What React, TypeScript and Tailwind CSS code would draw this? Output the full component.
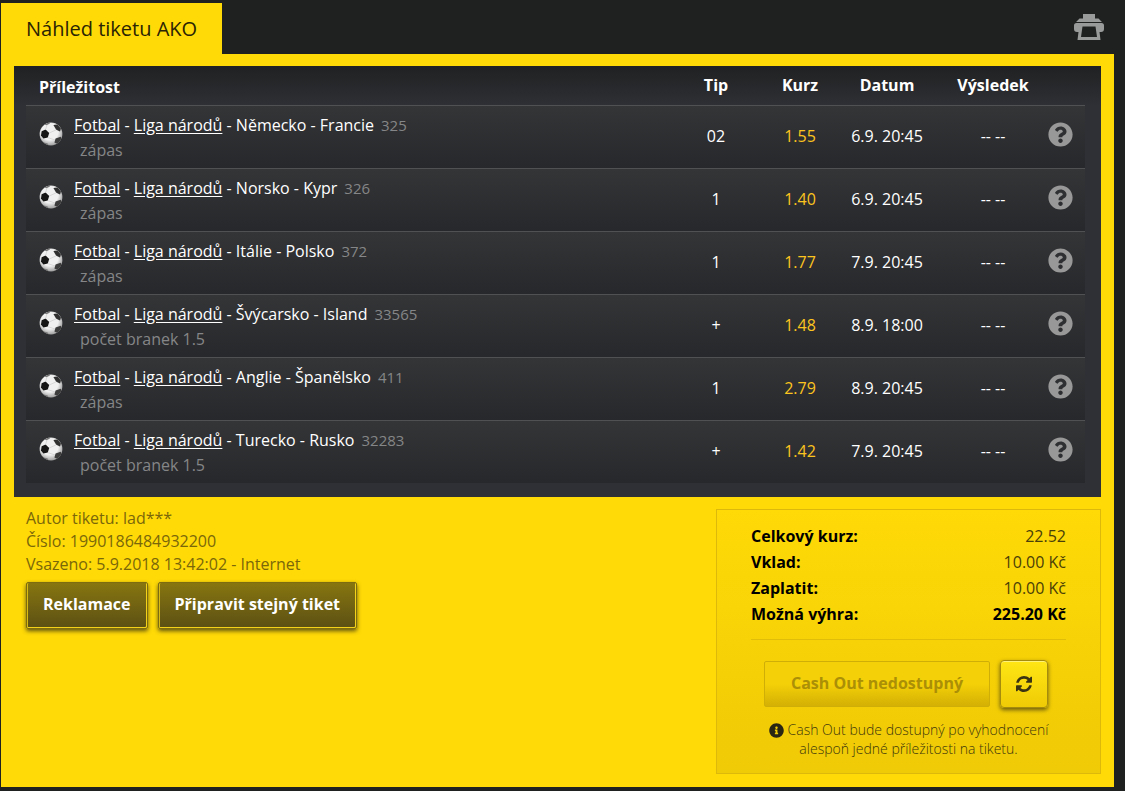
import React from "react";
import { FaInfoCircle, FaQuestionCircle } from "react-icons/fa";

interface Bet {
  match: string;
  code: string;
  market: string;
  tip: string;
  odds: string;
  date: string;
}

const bets: Bet[] = [
  { match: "Německo - Francie", code: "325", market: "zápas", tip: "02", odds: "1.55", date: "6.9. 20:45" },
  { match: "Norsko - Kypr", code: "326", market: "zápas", tip: "1", odds: "1.40", date: "6.9. 20:45" },
  { match: "Itálie - Polsko", code: "372", market: "zápas", tip: "1", odds: "1.77", date: "7.9. 20:45" },
  { match: "Švýcarsko - Island", code: "33565", market: "počet branek 1.5", tip: "+", odds: "1.48", date: "8.9. 18:00" },
  { match: "Anglie - Španělsko", code: "411", market: "zápas", tip: "1", odds: "2.79", date: "8.9. 20:45" },
  { match: "Turecko - Rusko", code: "32283", market: "počet branek 1.5", tip: "+", odds: "1.42", date: "7.9. 20:45" },
];

const summary = [
  { label: "Celkový kurz:", value: "22.52" },
  { label: "Vklad:", value: "10.00 Kč" },
  { label: "Zaplatit:", value: "10.00 Kč" },
  { label: "Možná výhra:", value: "225.20 Kč", strong: true },
];

const BallIcon = () => (
  <svg viewBox="0 0 24 24" className="h-6 w-6 shrink-0" aria-hidden="true">
    <defs>
      <radialGradient id="ball" cx="0.45" cy="0.4" r="0.6">
        <stop offset="0.6" stopColor="#f0f0f0" />
        <stop offset="1" stopColor="#a0a0a0" />
      </radialGradient>
      <clipPath id="ball-clip">
        <circle cx="12" cy="12" r="11.4" />
      </clipPath>
    </defs>
    <circle cx="12" cy="12" r="11.4" fill="url(#ball)" />
    <g clipPath="url(#ball-clip)">
      <path d="M2.6 9.2 6.6 7.6 10.2 11 8.8 15.6 4.4 16.6 2 13.4Z" fill="#151515" />
      <path d="M14.4 3 18.4 2.4 22 6.4 21 9.6 17.2 7.8Z" fill="#303030" />
      <path d="M16.6 16.6 21.6 14.8 23 17 18.6 22 15.4 20.6Z" fill="#3c3c3c" />
      <path d="M5.4 2.4 9.6 0 11 1.4 7.6 3.2Z" fill="#777" />
      <path d="M5 20.4 8.6 21.4 10 24 6 23Z" fill="#777" />
      <path d="M10.2 11 17.2 7.8M8.8 15.6 16 18M6.6 7.6 8 3" stroke="#d2d2d2" strokeWidth="0.8" fill="none" />
    </g>
  </svg>
);

const PrinterIcon = () => (
  <svg viewBox="0 0 30 26" className="h-[26px] w-[30px]" fill="#999b9b" aria-hidden="true">
    <path d="M9 0h12v4.500h3.500L28 8H2l3.500-3.500H9Z" />
    <path
      fillRule="evenodd"
      d="M2.500 9h25Q30 9 30 11.500V15q0 3-3 3h-1.500l1 8h-23l1-8H3q-3 0-3-3v-3.500Q0 9 2.500 9ZM8.500 12.500 7 23h16l-1.500-10.500Z"
    />
  </svg>
);

const RefreshIcon = () => (
  <svg viewBox="0 0 1536 1536" className="h-4 w-4" fill="#3b3413" aria-hidden="true">
    <path d="M1511 928q0 5-1 7-64 268-268 434.500T764 1536q-146 0-282.500-55T238 1324l-129 129q-19 19-45 19t-45-19-19-45V960q0-26 19-45t45-19h448q26 0 45 19t19 45-19 45l-137 137q71 66 161 102t187 36q134 0 250-65t186-179q11-17 53-117 8-23 30-23h192q13 0 22.500 9.500t9.500 22.500zm25-800v448q0 26-19 45t-45 19h-448q-26 0-45-19t-19-45 19-45l138-138Q969 256 768 256q-134 0-250 65T332 500q-11 17-53 117-8 23-30 23H50q-13 0-22.500-9.500T18 608v-7q65-268 270-434.500T768 0q146 0 284 55.500T1297 212l130-129q19-19 45-19t45 19 19 45z" />
  </svg>
);

const BetRow = ({ bet }: { bet: Bet }) => (
  <tr className="h-[63px] border-t border-[#505153] bg-linear-to-b from-[#343537] to-[#27282b] text-center">
    <td className="text-left">
      <div className="flex items-start gap-[11px] pt-1 pl-[13px]">
        <div className="pt-[9px]">
          <BallIcon />
        </div>
        <div className="pb-[2px] leading-[25px]">
          <div className="text-white">
            <a href="#fotbal" className="underline underline-offset-2">Fotbal</a>
            {" - "}
            <a href="#liga-narodu" className="underline underline-offset-2">Liga národů</a>
            {" - "}
            {bet.match}
            <span className="ml-[7px] text-[15px] text-[#858687]">{bet.code}</span>
          </div>
          <div className="pl-[6px] text-[#858687]">{bet.market}</div>
        </div>
      </div>
    </td>
    <td className="pb-[2px]">{bet.tip}</td>
    <td className="pb-[2px] text-[#fcc41e]">{bet.odds}</td>
    <td className="pb-[2px]">{bet.date}</td>
    <td className="pb-[2px]">-- --</td>
    <td>
      <button type="button" aria-label="Nápověda" className="block cursor-pointer pb-1">
        <FaQuestionCircle className="h-[25px] w-[25px] text-[#989898]" />
      </button>
    </td>
  </tr>
);

const BetTable = () => (
  <div className="bg-linear-to-b from-[#202122] to-[#2f3035] to-[40px] pr-4 pb-[14px] pl-3">
    <table className="w-full table-fixed border-collapse text-white">
      <colgroup>
        <col />
        <col className="w-24" />
        <col className="w-[72px]" />
        <col className="w-[102px]" />
        <col className="w-[110px]" />
        <col className="w-[37px]" />
      </colgroup>
      <thead>
        <tr className="h-[39px] font-bold">
          <th scope="col" className="pt-1 pl-[13px] text-left">Příležitost</th>
          <th scope="col">Tip</th>
          <th scope="col">Kurz</th>
          <th scope="col">Datum</th>
          <th scope="col">Výsledek</th>
          <td />
        </tr>
      </thead>
      <tbody>
        {bets.map((bet) => (
          <BetRow key={bet.code} bet={bet} />
        ))}
      </tbody>
    </table>
  </div>
);

const ActionButton = ({ children }: { children: React.ReactNode }) => (
  <button
    type="button"
    className="h-[47px] cursor-pointer rounded-xs border border-[#7d6c10] bg-linear-to-b from-[#87760f] to-[#5c5013] px-4 pb-1 font-bold text-white shadow-[inset_-1px_-1px_0_#f5d21a,inset_1px_0_0_#d9bb12,0_2px_4px_#5c5013]"
  >
    {children}
  </button>
);

const Summary = () => (
  <section className="w-[385px] border border-[#dcb90a] bg-linear-to-b from-[#ffda07] to-[#efca06] px-[34px] pt-[13px] pb-[15px]">
    <dl className="border-b border-[#dfbd08] pb-3 leading-[26px] text-black">
      {summary.map((item) => (
        <div key={item.label} className="flex justify-between">
          <dt className="font-bold">{item.label}</dt>
          <dd className={item.strong ? "font-bold" : "text-[#4a3f08]"}>{item.value}</dd>
        </div>
      ))}
    </dl>
    <div className="mt-5 flex items-center gap-[10px] pr-[18px] pl-[13px]">
      <button
        type="button"
        disabled
        className="h-[46px] flex-1 rounded-xs border border-[#d0ae08] bg-linear-to-b from-[#f4d008] from-50% to-[#d3b004] pb-[2px] font-bold text-[#ab8f06]"
      >
        Cash Out nedostupný
      </button>
      <button
        type="button"
        aria-label="Obnovit"
        className="flex h-12 w-12 cursor-pointer items-center justify-center rounded-sm border border-[#a58c0c] bg-linear-to-b from-[#ffe614] to-[#efcb05] shadow-[inset_0_1px_0_#fff27a,0_2px_4px_#6b5a0c]"
      >
        <RefreshIcon />
      </button>
    </div>
    <p className="mt-3 text-center text-sm leading-[19px] font-light text-[#3f370c]">
      <FaInfoCircle className="mr-1 inline-block h-[15px] w-[15px] align-[-3px] text-[#2a2614]" />
      Cash Out bude dostupný po vyhodnocení
      <br />
      alespoň jedné příležitosti na tiketu.
    </p>
  </section>
);

export default function App() {
  return (
    <div className="min-h-screen bg-[#1f2020] pt-[3px] pr-[11px] pb-1 pl-px font-['Open_Sans','Noto_Sans',sans-serif] text-base">
      <header className="flex items-start justify-between pr-[10px]">
        <h1 className="h-[51px] bg-[#ffda07] px-[25px] text-xl leading-[51px] font-normal text-[#2a2404]">
          Náhled tiketu AKO
        </h1>
        <button type="button" aria-label="Tisk" className="mt-[11px] cursor-pointer">
          <PrinterIcon />
        </button>
      </header>
      <main className="bg-[#ffda07] px-[13px] pt-3 pb-[13px]">
        <BetTable />
        <div className="flex items-start justify-between pt-3">
          <div className="pl-3">
            <div className="-mt-[2px] leading-[23px] text-[#7a670a]">
              <p>Autor tiketu: lad***</p>
              <p>Číslo: 1990186484932200</p>
              <p>Vsazeno: 5.9.2018 13:42:02 - Internet</p>
            </div>
            <div className="mt-[6px] flex gap-[10px]">
              <ActionButton>Reklamace</ActionButton>
              <ActionButton>Připravit stejný tiket</ActionButton>
            </div>
          </div>
          <Summary />
        </div>
      </main>
    </div>
  );
}
